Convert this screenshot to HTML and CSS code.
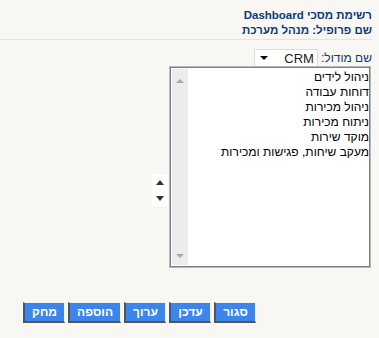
FILE: index.html
```html
<!DOCTYPE html>
<html dir="rtl" lang="he">
<head>
    <title>רשימת מסכי Dashboard</title>
    <meta charset="UTF-8">
    <link rel="stylesheet" href="styles.css">
</head>
<body>
    <div class="header">
        <div>רשימת מסכי Dashboard</div>
        <div>שם פרופיל: מנהל מערכת</div>
    </div>

    <div class="module-row">
        <label for="module">שם מודול:</label>
        <div class="select" id="module">
            <span>CRM</span>
            <span class="select-arrow"></span>
        </div>
    </div>

    <div class="list-area">
        <div class="listbox">
            <div class="items">
                <div>ניהול לידים</div>
                <div>דוחות עבודה</div>
                <div>ניהול מכירות</div>
                <div>ניתוח מכירות</div>
                <div>מוקד שירות</div>
                <div>מעקב שיחות, פגישות ומכירות</div>
            </div>
            <div class="scrollbar">
                <span class="sb-up"></span>
                <span class="sb-down"></span>
            </div>
        </div>
        <div class="movers">
            <span class="up"></span>
            <span class="down"></span>
        </div>
    </div>

    <div class="buttons">
        <button type="button">סגור</button>
        <button type="button">עדכן</button>
        <button type="button">ערוך</button>
        <button type="button">הוספה</button>
        <button type="button">מחק</button>
    </div>
</body>
</html>
```

FILE: styles.css
```css
body {
    margin: 0;
    background-color: #f8f7f3;
    font-family: "Liberation Sans", Arial, sans-serif;
    font-size: 12px;
    color: #000;
}

.header {
    margin-right: 7px;
    padding-top: 8px;
    padding-bottom: 1px;
    border-bottom: 1px solid #e6e2d4;
    color: #0d3a7c;
    font-weight: bold;
    font-size: 11.5px;
    line-height: 15px;
}

.module-row {
    display: flex;
    align-items: center;
    margin-top: 9px;
    margin-right: 7px;
}

.module-row label {
    color: #0d3a7c;
    font-size: 12px;
    margin-left: 3px;
}

.select {
    display: flex;
    align-items: center;
    justify-content: space-between;
    width: 54px;
    height: 16px;
    padding: 0 3px 0 5px;
    background-color: #fff;
    border: 1px solid #dcdcdc;
    font-size: 13px;
    color: #222;
}

.select-arrow {
    width: 0;
    height: 0;
    border-left: 4px solid transparent;
    border-right: 4px solid transparent;
    border-top: 4px solid #000;
}

.list-area {
    display: flex;
    margin-right: 9px;
}

.listbox {
    display: flex;
    width: 198px;
    height: 198px;
    background-color: #fff;
    border: 1px solid #7f7f87;
    outline: 1px solid #b8b8bc;
}

.items {
    flex: 1;
    padding-top: 2px;
    font-size: 12px;
    line-height: 15px;
    color: #000;
}

.scrollbar {
    display: flex;
    flex-direction: column;
    justify-content: space-between;
    align-items: center;
    width: 16px;
    margin: 1px;
    padding: 10px 0 7px;
    box-sizing: border-box;
    background-color: #ececec;
}

.sb-up,
.sb-down {
    width: 0;
    height: 0;
    border-left: 4px solid transparent;
    border-right: 4px solid transparent;
}

.sb-up {
    border-bottom: 4px solid #a9a9a9;
}

.sb-down {
    border-top: 4px solid #a9a9a9;
}

.movers {
    display: flex;
    flex-direction: column;
    align-items: center;
    justify-content: space-around;
    width: 16px;
    height: 32px;
    margin-top: 107px;
    margin-right: 2px;
    background-color: #fff;
}

.up,
.down {
    width: 0;
    height: 0;
    border-left: 4px solid transparent;
    border-right: 4px solid transparent;
}

.up {
    border-bottom: 5px solid #333;
}

.down {
    border-top: 5px solid #333;
}

.buttons {
    display: flex;
    gap: 3px;
    margin-top: 35px;
    margin-right: 123px;
}

.buttons button {
    min-width: 42px;
    height: 21px;
    padding: 0 7px;
    background-color: #3b85ed;
    color: #fff;
    font-family: "Liberation Sans", Arial, sans-serif;
    font-weight: bold;
    font-size: 12px;
    border: 1px solid;
    border-color: #f0f0f0 #f0f0f0 #555 #555;
    border-width: 1px 1px 2px 2px;
    cursor: pointer;
}
```
